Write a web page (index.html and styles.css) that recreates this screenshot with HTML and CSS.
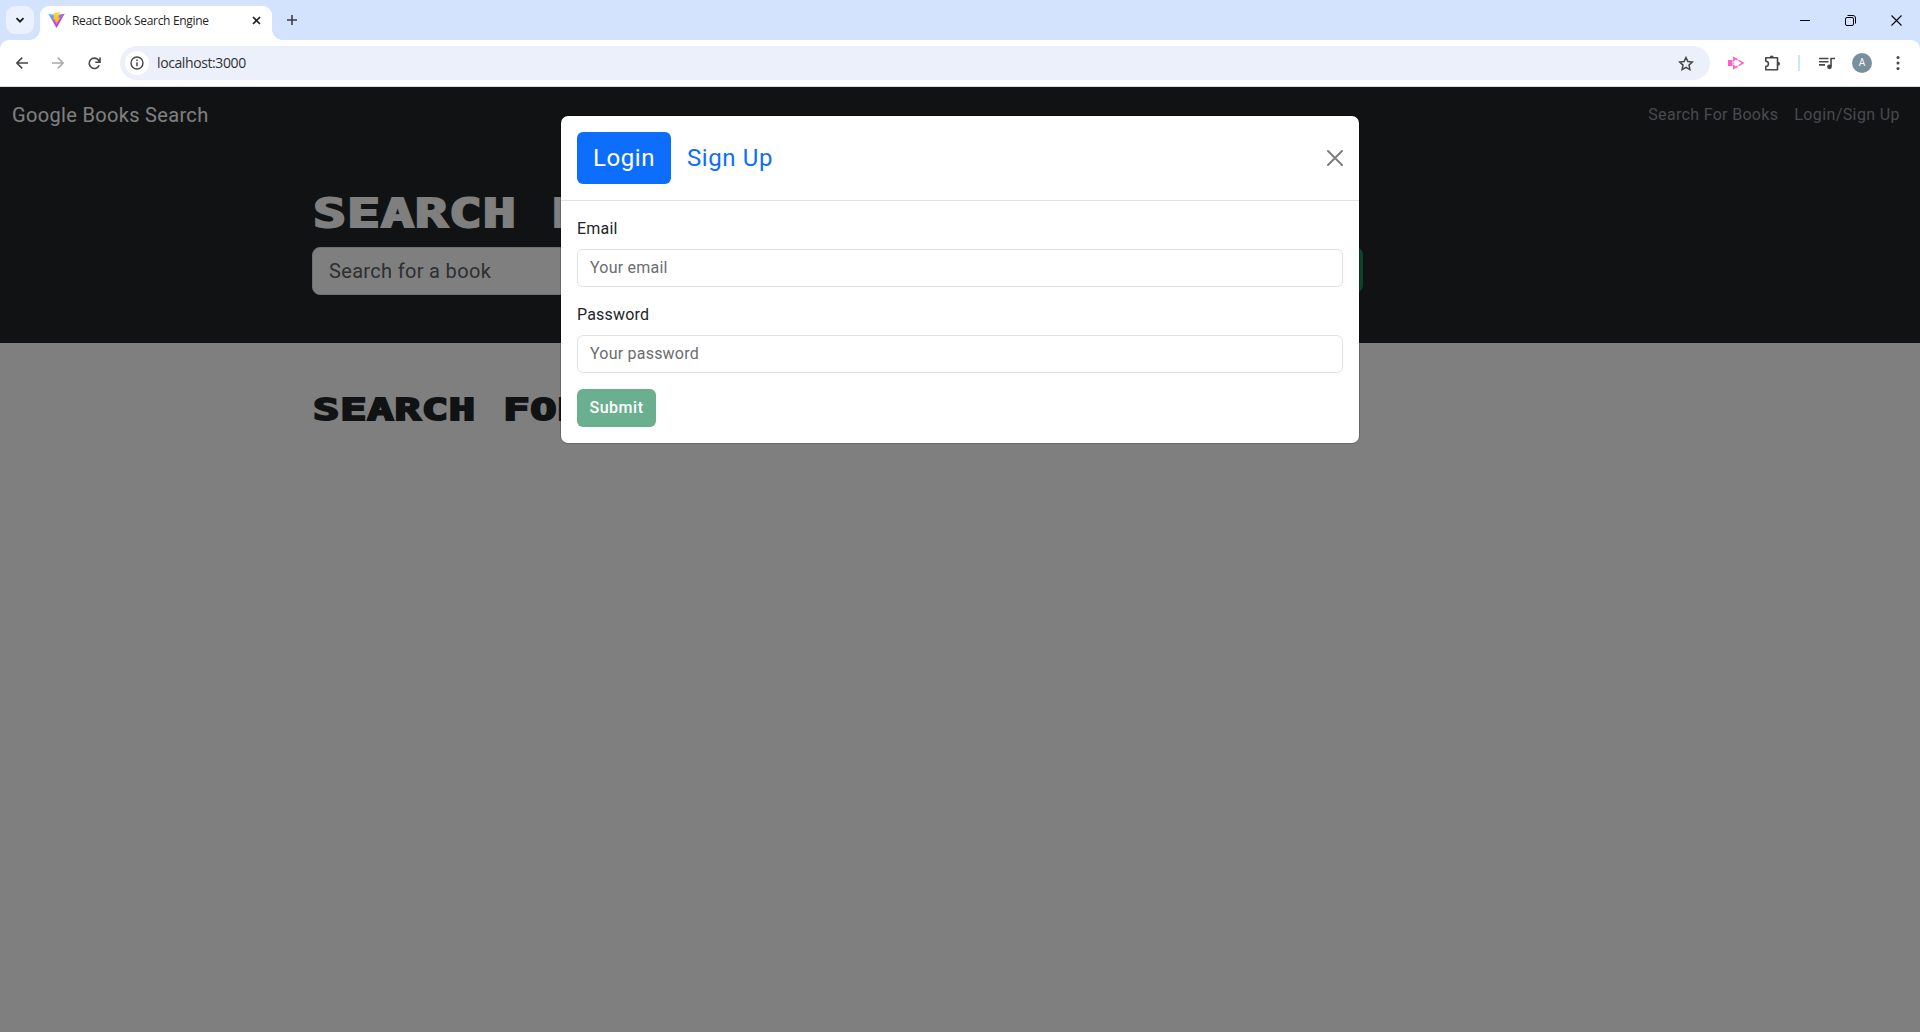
FILE: index.html
```html
<!DOCTYPE html>
<html lang="en">
<head>
<meta charset="utf-8">
<title>React Book Search Engine</title>
<link rel="stylesheet" href="styles.css">
</head>
<body>
<header class="browser">
  <div class="tabs">
    <div class="tab-menu"><svg width="10" height="7" viewBox="0 0 10 7"><path d="M1.5 1.2 5 4.7 8.5 1.2" fill="none" stroke="#1f1f1f" stroke-width="1.9"/></svg></div>
    <div class="tab">
      <svg class="vite" width="17" height="16" viewBox="0 0 17 16"><defs><linearGradient id="a" x1="0" y1="0" x2=".7" y2="1"><stop offset="0" stop-color="#41d1ff"/><stop offset=".7" stop-color="#bd34fe"/></linearGradient><linearGradient id="b" x1="0" y1="0" x2="0" y2="1"><stop offset="0" stop-color="#ffdd35"/><stop offset="1" stop-color="#ffa800"/></linearGradient></defs><path d="M.3 1.8 8 3.1l8.700-1.300L8.500 16z" fill="url(#a)"/><path d="M12 0 5.800 1.100 5.500 8l2-.4-.7 2.600 1.700-.4-1 4 5-8.200-2.200.4z" fill="url(#b)"/></svg>
      <span class="tab-title">React Book Search Engine</span>
      <svg class="tab-close" width="9" height="9" viewBox="0 0 9 9"><path d="m1 1 7 7M8 1 1 8" stroke="#1f1f1f" stroke-width="1.6"/></svg>
    </div>
    <svg class="plus" width="10" height="10" viewBox="0 0 10 10"><path d="M5 0v10M0 5h10" stroke="#3a3d42" stroke-width="1.6"/></svg>
    <div class="window-controls">
      <svg width="10" height="11" viewBox="0 0 10 11"><path d="M0 5.5h10" stroke="#000"/></svg>
      <svg width="11" height="11" viewBox="0 0 11 11"><rect x=".5" y="2.5" width="8" height="8" rx="1.5" fill="none" stroke="#000"/><path d="M2.5 .5H8a2.500 2.500 0 0 1 2.500 2.500v5.500" fill="none" stroke="#000"/></svg>
      <svg width="11" height="11" viewBox="0 0 11 11"><path d="m.5.5 10 10M10.500.5l-10 10" stroke="#000" stroke-width="1.1"/></svg>
    </div>
  </div>
  <div class="toolbar">
    <svg class="back" width="12" height="12" viewBox="0 0 12 12"><path d="M12 6H1M6.200.6.8 6l5.400 5.400" fill="none" stroke="#474747" stroke-width="1.6"/></svg>
    <svg class="forward" width="12" height="12" viewBox="0 0 12 12"><path d="M0 6h11M5.800.6 11.200 6l-5.400 5.400" fill="none" stroke="#aaa" stroke-width="1.6"/></svg>
    <svg class="reload" width="13" height="13" viewBox="0 0 13 13"><path d="M11.200 8.200A5.200 5.200 0 1 1 10.600 3.300L11.600 5M12 .5v4.800H7.300" fill="none" stroke="#474747" stroke-width="1.6"/></svg>
    <div class="address">
      <span class="info"><svg width="14" height="14" viewBox="0 0 14 14"><circle cx="7" cy="7" r="6" fill="none" stroke="#474747" stroke-width="1.4"/><path d="M7 6.200v4M7 3.500v1.500" stroke="#474747" stroke-width="1.500"/></svg></span>
      <span class="url">localhost:3000</span>
      <svg class="star" width="16" height="15" viewBox="0 0 16 15"><path d="m8 1.500 1.900 4.100 4.400.5-3.300 3 .9 4.500L8 11.400l-3.900 2.200.9-4.500-3.300-3 4.400-.5z" fill="none" stroke="#474747" stroke-width="1.500"/></svg>
    </div>
    <svg class="ext" width="17" height="14" viewBox="0 0 17 14"><path d="M0 4h4.500v6H0zM5 .5l5 2.600-1 1.400-2.300-1.200V5H5zM5 13.500l5-2.600-1-1.400-2.300 1.200V9H5zM11 3.700 16.500 7 11 10.300V8.500L13.500 7 11 5.500z" fill="#ff5fc4"/><path d="M5.700 5v4M9.500 3.800l1.700 1M9.500 10.200l1.700-1" stroke="#ff9ddb"/></svg>
    <svg class="puzzle" width="17" height="17" viewBox="0 0 17 17"><path d="M1.800 2.800h11.700v12H1.800v-3.300a2.500 2.500 0 0 0 0-5.300z" fill="none" stroke="#474747" stroke-width="1.600" stroke-linejoin="round"/><path d="M5.700 2.500a2 2 0 0 1 4 0zM14 6.700a2 2 0 0 1 0 4z" fill="#474747"/></svg>
    <span class="divider"></span>
    <svg class="media" width="16" height="13" viewBox="0 0 16 13"><path d="M0 1.500h9.500M0 4.700h9.500M0 7.900h6M12 9V1.500h4" fill="none" stroke="#474747" stroke-width="1.600"/><circle cx="10.500" cy="9.800" r="2.400" fill="#474747"/></svg>
    <span class="avatar">A</span>
    <svg class="more" width="4" height="14" viewBox="0 0 4 14"><g fill="#474747"><circle cx="2" cy="1.500" r="1.500"/><circle cx="2" cy="7" r="1.500"/><circle cx="2" cy="12.500" r="1.500"/></g></svg>
  </div>
</header>
<main class="page">
  <nav class="navbar"><span class="brand">Google Books Search</span><span class="nav-books">Search For Books</span><span class="nav-login">Login/Sign Up</span></nav>
  <section class="hero"><div class="container">
    <h1>SEARCH F</h1>
    <div class="search-row"><div class="search">Search for a book</div><div class="search-button"></div></div>
  </div></section>
  <section class="results container"><h2>SEARCH FOR</h2></section>
  <div class="backdrop">
    <div class="modal">
      <div class="modal-header"><span class="pill">Login</span><span class="signup">Sign Up</span><svg class="close" width="16" height="16" viewBox="0 0 16 16"><path d="m1 1 14 14M15 1 1 15" stroke="#7f7f7f" stroke-width="2" stroke-linecap="round"/></svg></div>
      <div class="modal-body">
        <label class="label">Email</label><div class="field">Your email</div>
        <label class="label">Password</label><div class="field">Your password</div>
        <div class="submit">Submit</div>
      </div>
    </div>
  </div>
</main>
</body>
</html>
```
FILE: styles.css
```css
*{box-sizing:border-box}
body{margin:0;width:1920px;height:1032px;overflow:hidden;display:flex;flex-direction:column;font:16px/24px Roboto,"Open Sans",sans-serif;color:#212529;background:#fff}
svg{display:block;flex:none}
span,h1,h2{white-space:nowrap}
.browser{flex:none;height:87px;background:#d3e2fd;border-bottom:1px solid #dcdcdc}
.tabs{height:40px;display:flex;align-items:flex-start}
.tab-menu{width:28px;height:28px;margin:6px 6px 0;border-radius:9px;background:#ebf1fd;display:flex;align-items:center;justify-content:center}
.tab{width:232px;height:34px;margin-top:6px;padding:0 11px 6px 8px;border-radius:9px 9px 0 0;background:#fff;display:flex;align-items:center;position:relative}
.tab::before,.tab::after{content:"";position:absolute;bottom:0;width:10px;height:10px}
.tab::before{left:-10px;background:radial-gradient(circle at 0 0,transparent 9.500px,#fff 10px)}
.tab::after{right:-10px;background:radial-gradient(circle at 100% 0,transparent 9.500px,#fff 10px)}
.tab-title{margin:2px 0 0 7px;font:12px/16px "Open Sans",sans-serif;color:#1f1f1f;letter-spacing:-.32px}
.tab-close{margin-left:auto}
.plus{margin:15px 0 0 15px}
.window-controls{margin:15px 18px 0 auto;display:flex;gap:35px}
.toolbar{height:46px;background:#fff;border-radius:9px 9px 0 0;display:flex;align-items:center}
.back{margin-left:16px}.forward{margin-left:24px}.reload{margin-left:24px}
.address{margin-left:19px;width:1590px;height:34px;border-radius:17px;background:#ecf0fa;display:flex;align-items:center;padding:0 16px 0 5px}
.info{width:24px;height:24px;border-radius:50%;background:#fff;display:flex;align-items:center;justify-content:center}
.url{margin-left:8px;font:14px/20px "Open Sans",sans-serif;color:#303236;letter-spacing:-.4px}
.star{margin-left:auto}
.ext{margin-left:18px}.puzzle{margin-left:19px}
.divider{width:2px;height:16px;margin-left:17px;background:#d3e2fd}
.media{margin-left:19px}
.avatar{width:20px;height:20px;margin-left:17px;border-radius:50%;background:#78909c;color:#fff;font-size:10px;line-height:20px;text-align:center}
.more{margin-left:24px}
.page{flex:1;position:relative;background:#fff}
.navbar{height:56px;background:#212529;display:flex;align-items:center;padding:0 20px 0 12px;color:#fff}
.brand{font-size:20px;letter-spacing:.33px}
.nav-books{margin-left:auto;color:#90959a;letter-spacing:.32px}
.nav-login{margin-left:16px;color:#90959a;letter-spacing:.39px}
.hero{height:200px;background:#212529;padding-top:47px;color:#fff}
.container{width:1320px;margin:0 auto;padding:0 12px}
h1,h2{width:176px;overflow:hidden;margin:0 0 0 1px;font-family:"DejaVu Sans Mono",monospace;font-weight:700;transform-origin:left;transform:scaleX(1.41);-webkit-text-stroke:2px}
h1{font-size:39px;letter-spacing:.6px;line-height:48px;margin-bottom:9px}
h2{font-size:31px;letter-spacing:.6px;line-height:38px}
.search-row{display:flex;gap:24px}
.search{width:852px;height:48px;border:1px solid #dee2e6;border-radius:8px;background:#fff;padding:0 16px;font-size:20px;line-height:46px;letter-spacing:.33px;color:#5a5e62}
.search-button{flex:1;max-width:175px;height:46px;border-radius:8px;background:#198754}
.results{padding-top:47px}
.backdrop{position:absolute;inset:0;background:rgba(0,0,0,.5);padding-top:28px}
.modal{width:800px;height:329px;margin:0 auto;border-radius:8px;background:#fff;border:1px solid rgba(0,0,0,.18);background-clip:padding-box}
.modal-header{height:85px;border-bottom:1px solid #dee2e6;display:flex;align-items:center;padding:0 16px;font-size:24px;letter-spacing:.6px}
.pill{width:94px;height:52px;border-radius:6px;background:#0d6efd;color:#fff;line-height:52px;text-align:center}
.signup{margin-left:16px;color:#0d6efd}
.close{margin-left:auto}
.modal-body{padding:16px}
.label{display:block;margin-bottom:8px;letter-spacing:.2px}
.field{height:38px;border:1px solid #dee2e6;border-radius:6px;padding:0 12px;line-height:36px;letter-spacing:.22px;color:#6a6d70;margin-bottom:16px}
.submit{width:79px;height:38px;border-radius:6px;background:#6ab090;color:#fff;font-weight:500;line-height:38px;letter-spacing:.5px;text-align:center}
```
